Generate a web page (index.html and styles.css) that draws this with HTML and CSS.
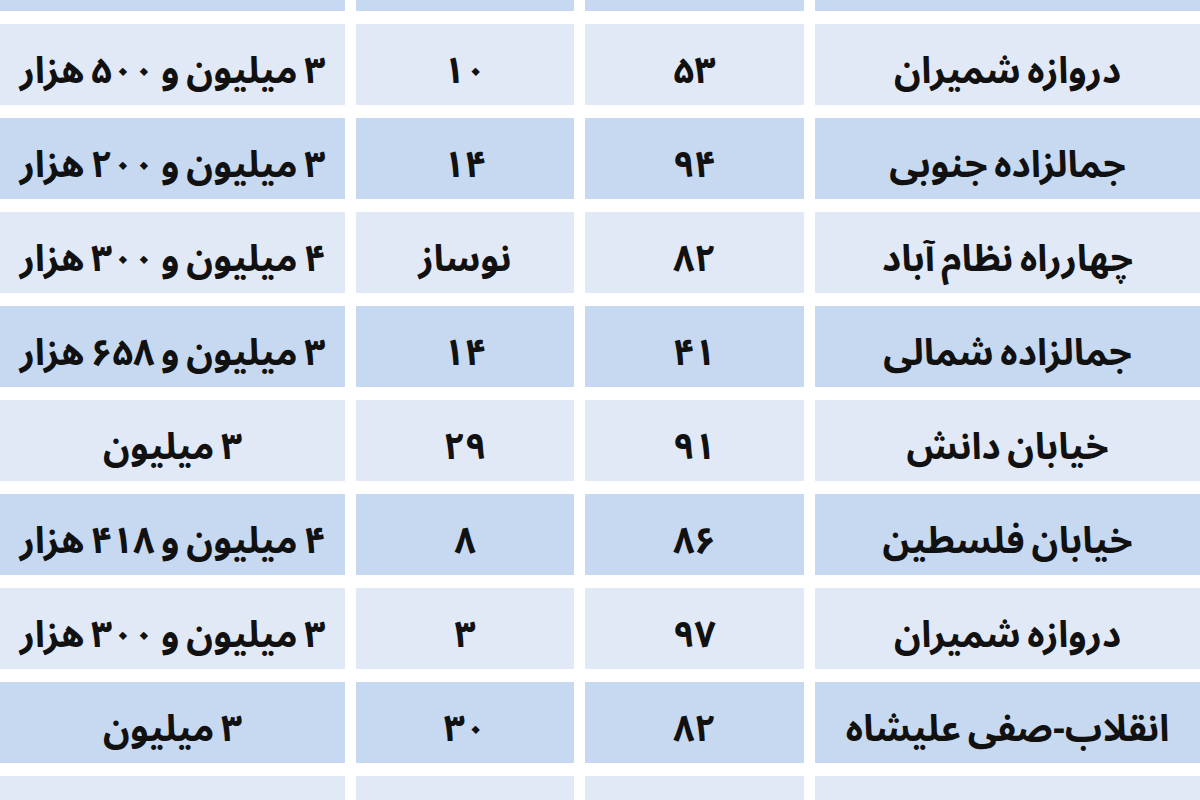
FILE: index.html
```html
<!DOCTYPE html>
<html lang="fa" dir="rtl">
<head>
<meta charset="utf-8">
<title>جدول قیمت</title>
<link rel="stylesheet" href="styles.css">
</head>
<body>
<div class="table">
  <div class="cell blue">بلوار کشاورز</div><div class="cell blue">۶۷</div><div class="cell blue">۱۲</div><div class="cell blue">۳ میلیون و ۸۰۰ هزار</div>

  <div class="cell light">دروازه شمیران</div><div class="cell light">۵۳</div><div class="cell light">۱۰</div><div class="cell light">۳ میلیون و ۵۰۰ هزار</div>

  <div class="cell blue">جمالزاده جنوبی</div><div class="cell blue">۹۴</div><div class="cell blue">۱۴</div><div class="cell blue">۳ میلیون و ۲۰۰ هزار</div>

  <div class="cell light">چهارراه نظام آباد</div><div class="cell light">۸۲</div><div class="cell light">نوساز</div><div class="cell light">۴ میلیون و ۳۰۰ هزار</div>

  <div class="cell blue">جمالزاده شمالی</div><div class="cell blue">۴۱</div><div class="cell blue">۱۴</div><div class="cell blue">۳ میلیون و ۶۵۸ هزار</div>

  <div class="cell light">خیابان دانش</div><div class="cell light">۹۱</div><div class="cell light">۲۹</div><div class="cell light">۳ میلیون</div>

  <div class="cell blue">خیابان فلسطین</div><div class="cell blue">۸۶</div><div class="cell blue">۸</div><div class="cell blue">۴ میلیون و ۴۱۸ هزار</div>

  <div class="cell light">دروازه شمیران</div><div class="cell light">۹۷</div><div class="cell light">۳</div><div class="cell light">۳ میلیون و ۳۰۰ هزار</div>

  <div class="cell blue">انقلاب-صفی علیشاه</div><div class="cell blue">۸۲</div><div class="cell blue">۳۰</div><div class="cell blue">۳ میلیون</div>

  <div class="cell light">میدان آزادی</div><div class="cell light">۷۵</div><div class="cell light">۱۵</div><div class="cell light">۳ میلیون و ۱۰۰ هزار</div>
</div>
</body>
</html>
```

FILE: styles.css
```css
html, body {
  margin: 0;
  padding: 0;
  background: #ffffff;
  width: 1200px;
  height: 800px;
  overflow: hidden;
}

.table {
  direction: rtl;
  display: grid;
  grid-template-columns: 385px 219px 218px 345px;
  grid-auto-rows: 81px;
  column-gap: 11px;
  row-gap: 13px;
  margin-top: -70px;
  font-family: "Noto Sans Arabic", "Vazirmatn", "DejaVu Sans", sans-serif;
  font-weight: 700;
  font-size: 37px;
  line-height: 1.2;
  word-spacing: -3px;
  color: #111111;
}

.cell {
  display: flex;
  align-items: center;
  justify-content: center;
  padding-top: 14px;
  box-sizing: border-box;
  white-space: nowrap;
}

.light {
  background: #e2e9f6;
}

.blue {
  background: #c6d9f1;
}
```
